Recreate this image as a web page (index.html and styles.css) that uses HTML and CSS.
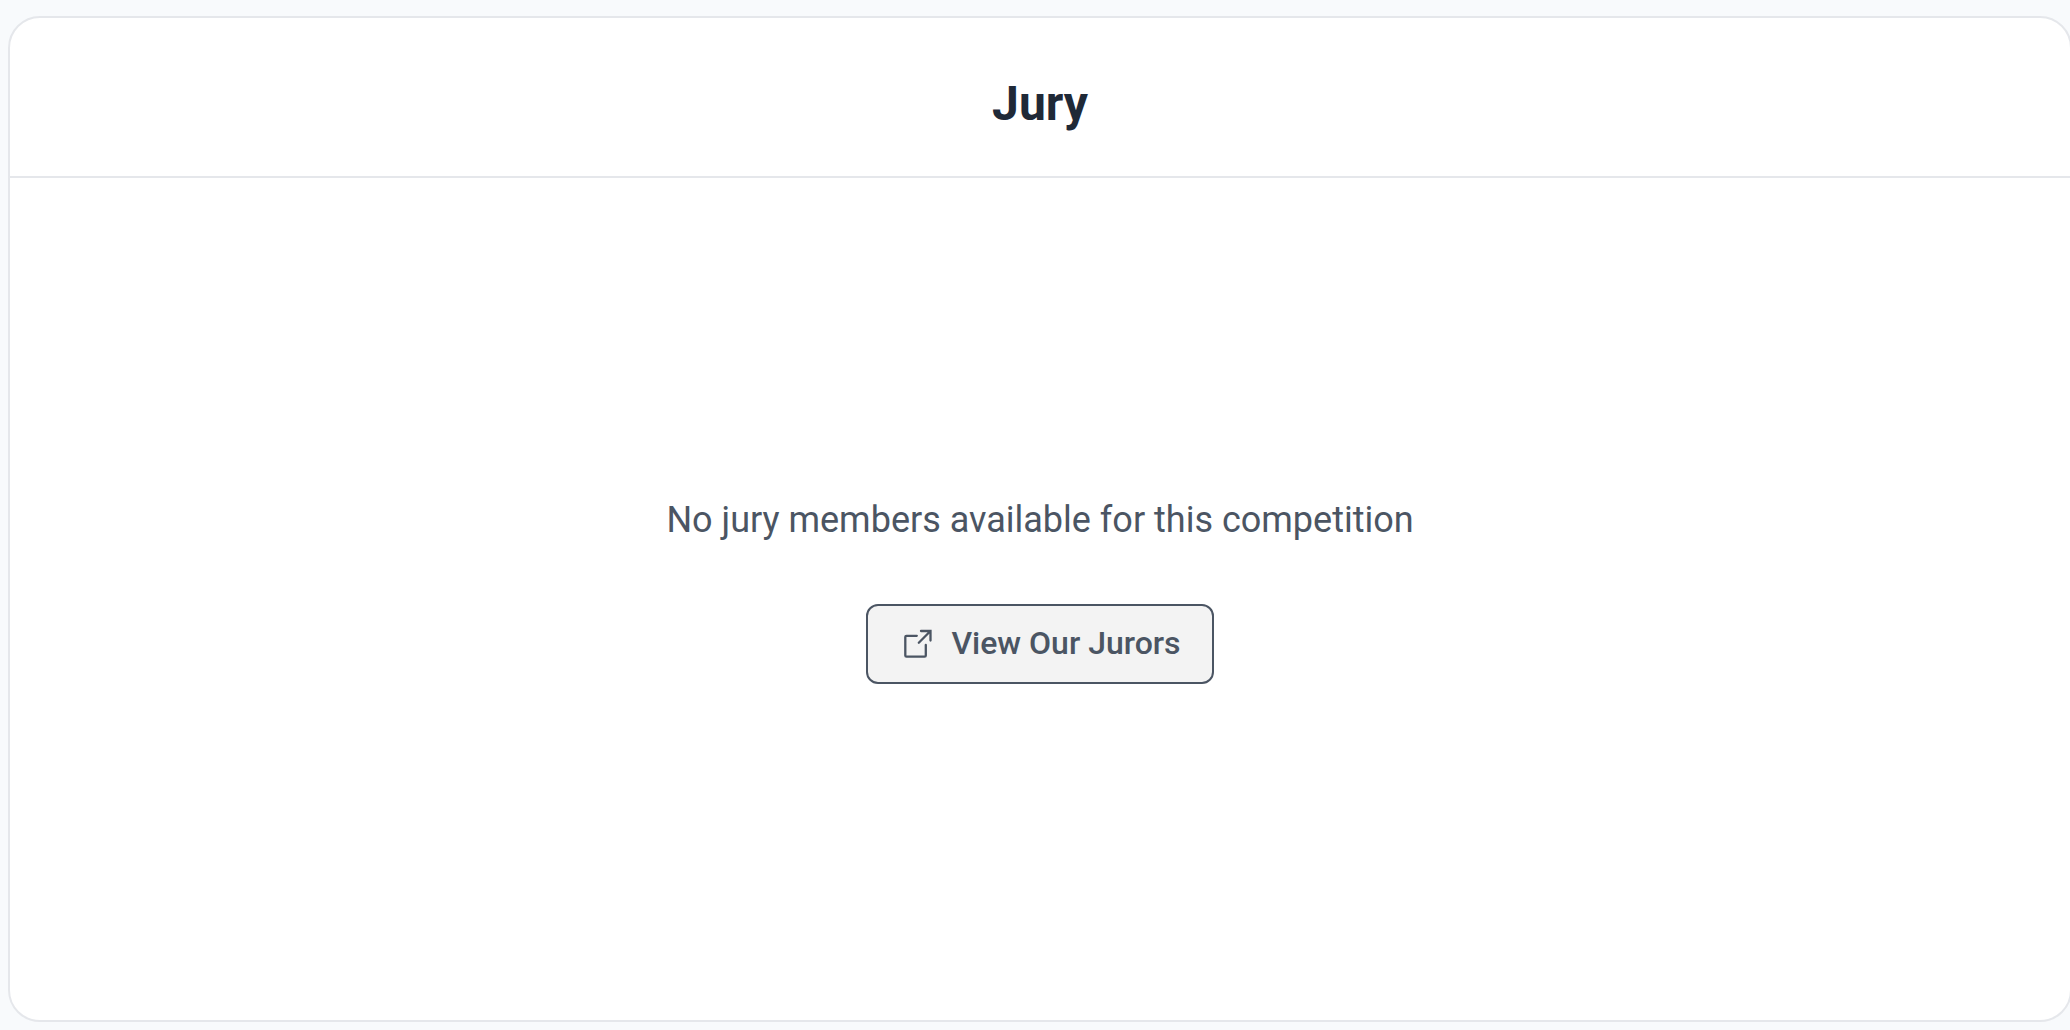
FILE: index.html
```html
<!DOCTYPE html>
<html lang="en">
<head>
<meta charset="utf-8">
<meta name="viewport" content="width=device-width, initial-scale=1">
<title>Jury</title>
<link rel="stylesheet" href="styles.css">
</head>
<body>
<main class="page">
  <section class="card">
    <header class="card-header">
      <h2 class="card-title">Jury</h2>
    </header>
    <div class="card-body">
      <p class="empty-text">No jury members available for this competition</p>
      <button class="jurors-button" type="button">
        <svg class="button-icon" viewBox="0 0 36 36" aria-hidden="true">
          <path d="M17.800 10.800H7.500a1.200 1.200 0 0 0-1.200 1.200V30.500a1.200 1.200 0 0 0 1.200 1.200H25.600a1.200 1.200 0 0 0 1.200-1.200V20"/>
          <path d="M22 6H31.500V15.500M31.200 6.300L19.800 17.700"/>
        </svg>
        <span>View Our Jurors</span>
      </button>
    </div>
  </section>
</main>
</body>
</html>
```

FILE: styles.css
```css
* {
  box-sizing: border-box;
}

body {
  margin: 0;
  overflow: hidden;
  background: #f8fafc;
  font-family: Roboto, "Liberation Sans", sans-serif;
}

.page {
  display: flex;
  min-height: 100vh;
  padding: 16px 0 8px 8px;
}

.card {
  display: flex;
  flex: 1;
  flex-direction: column;
  margin-right: -2px;
  border: 2px solid #e5e7eb;
  border-radius: 32px;
  background: #fff;
}

.card-header {
  padding: 57px 48px 43px;
  border-bottom: 2px solid #e5e7eb;
}

.card-title {
  margin: 0;
  color: #1f2937;
  font-size: 48px;
  font-weight: 700;
  line-height: 58px;
  text-align: center;
}

.card-body {
  display: flex;
  flex: 1;
  flex-direction: column;
  align-items: center;
  justify-content: center;
  gap: 57px;
  padding: 0 48px 21px;
}

.empty-text {
  margin: 0;
  color: #4b5563;
  font-size: 36px;
  line-height: 54px;
}

.jurors-button {
  display: flex;
  align-items: center;
  gap: 16px;
  height: 80px;
  padding: 0 31px 2px;
  border: 2px solid #4b5563;
  border-radius: 12px;
  background: #f3f3f3;
  color: #4b5563;
  font-family: inherit;
  font-size: 32px;
  font-weight: 500;
  cursor: pointer;
}

.button-icon {
  width: 36px;
  height: 36px;
  fill: none;
  stroke: currentColor;
  stroke-width: 2.3;
  stroke-linecap: round;
}
```
